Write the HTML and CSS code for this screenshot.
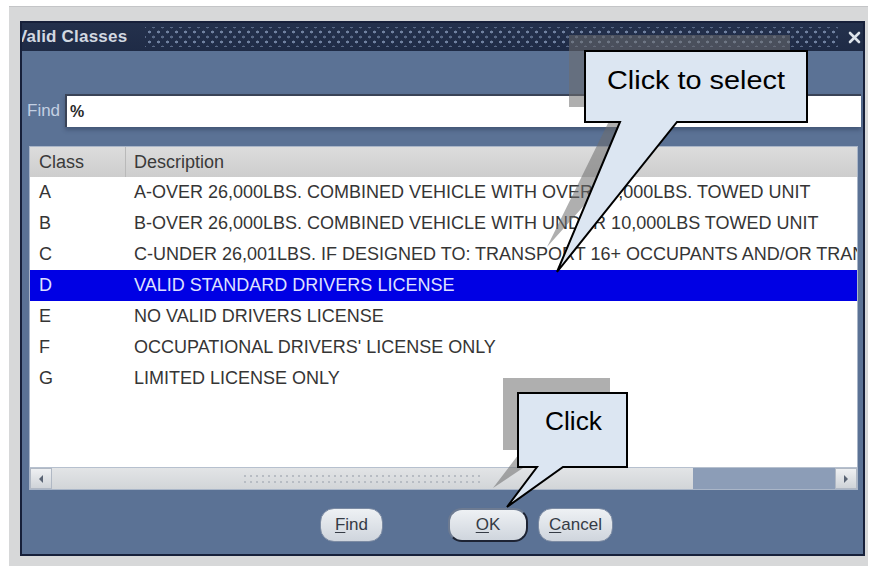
FILE: index.html
```html
<!DOCTYPE html>
<html lang="en">
<head>
<meta charset="utf-8">
<title>Valid Classes</title>
<link rel="stylesheet" href="styles.css">
</head>
<body>
<div class="frame">
  <div class="window">
    <div class="titlebar">
      <span class="title">Valid Classes</span>
      <span class="grip"></span>
      <svg class="close" width="13" height="13" viewBox="0 0 13 13"><path d="M2 2 L11 11 M11 2 L2 11" stroke="#dde3ea" stroke-width="2.6" stroke-linecap="round"/></svg>
    </div>

    <div class="find-row">
      <label class="find-label" for="find">Find</label>
      <div class="find-input" id="find">%</div>
    </div>

    <div class="list">
      <div class="list-head">
        <div class="cell col-class">Class</div>
        <div class="cell col-desc">Description</div>
      </div>
      <div class="list-body">
        <div class="row"><div class="cell col-class">A</div><div class="cell col-desc">A-OVER 26,000LBS. COMBINED VEHICLE WITH OVER 10,000LBS. TOWED UNIT</div></div>
        <div class="row"><div class="cell col-class">B</div><div class="cell col-desc">B-OVER 26,000LBS. COMBINED VEHICLE WITH UNDER 10,000LBS TOWED UNIT</div></div>
        <div class="row"><div class="cell col-class">C</div><div class="cell col-desc">C-UNDER 26,001LBS. IF DESIGNED TO: TRANSPORT 16+ OCCUPANTS AND/OR TRANSPORT HAZARDOUS MATERIALS</div></div>
        <div class="row selected"><div class="cell col-class">D</div><div class="cell col-desc">VALID STANDARD DRIVERS LICENSE</div></div>
        <div class="row"><div class="cell col-class">E</div><div class="cell col-desc">NO VALID DRIVERS LICENSE</div></div>
        <div class="row"><div class="cell col-class">F</div><div class="cell col-desc">OCCUPATIONAL DRIVERS' LICENSE ONLY</div></div>
        <div class="row"><div class="cell col-class">G</div><div class="cell col-desc">LIMITED LICENSE ONLY</div></div>
      </div>
      <div class="hscroll">
        <div class="sb-btn"><svg width="8" height="10" viewBox="0 0 8 10"><path d="M6 1 L2 5 L6 9 Z" fill="#5a6474"/></svg></div>
        <div class="sb-thumb"><span class="sb-dots"></span></div>
        <div class="sb-track"></div>
        <div class="sb-btn"><svg width="8" height="10" viewBox="0 0 8 10"><path d="M2 1 L6 5 L2 9 Z" fill="#5a6474"/></svg></div>
      </div>
    </div>

    <div class="buttons">
      <button class="btn btn-find"><u>F</u>ind</button>
      <button class="btn btn-ok"><u>O</u>K</button>
      <button class="btn btn-cancel"><u>C</u>ancel</button>
    </div>
  </div>
</div>

<svg class="callouts" width="872" height="569" viewBox="0 0 872 569">
  <!-- select callout -->
  <path class="co-shadow" d="M569 35 H790 V107 H672 L547 247 L616 107 H569 Z"/>
  <path class="co-box" d="M585 51 H807 V122 H677 L557 272 L620 122 H585 Z"/>
  <text class="co-text" x="607" y="89" textLength="178" lengthAdjust="spacingAndGlyphs">Click to select</text>
  <!-- OK callout -->
  <path class="co-shadow" d="M503 378 H610 V450 H550 L493 488 L522 450 H503 Z"/>
  <path class="co-box" d="M518 393 H627 V467 H563 L507 507 L537 467 H518 Z"/>
  <text class="co-text" x="545" y="430" textLength="57" lengthAdjust="spacingAndGlyphs">Click</text>
</svg>
</body>
</html>
```

FILE: styles.css
```css
html, body {
  margin: 0;
  padding: 0;
}

body {
  width: 872px;
  height: 569px;
  overflow: hidden;
  background: #ffffff;
  font-family: "Liberation Sans", Arial, sans-serif;
  position: relative;
}

/* light grey desktop frame around the form window */
.frame {
  margin: 6px 0 0 9px;
  width: 859px;
  padding: 14px 3px 10px 11px;
  box-sizing: border-box;
  background: #d7d8d9;
  border-top: 1px solid #c4c5c7;
}

.window {
  height: 535px;
  box-sizing: border-box;
  border: 2px solid #17203a;
  background: #5b7295;
  display: flex;
  flex-direction: column;
}

/* ---- title bar ---- */
.titlebar {
  height: 28px;
  flex: none;
  background: linear-gradient(#29375378, #1f2b46), #1f2b46;
  display: flex;
  align-items: center;
  overflow: hidden;
}

.title {
  margin-left: -6px;
  color: #d2d8e1;
  font-size: 17px;
  font-weight: bold;
  white-space: nowrap;
  letter-spacing: 0.2px;
}

.grip {
  flex: 1;
  height: 20px;
  margin: 0 10px 0 18px;
  background-image:
    radial-gradient(circle, #7081a0 1.2px, transparent 1.7px),
    radial-gradient(circle, #596987 1.2px, transparent 1.7px);
  background-size: 9px 10px, 9px 10px;
  background-position: 0 0, 4px 5px;
}

.close {
  flex: none;
  margin-right: 2px;
}

/* ---- find field ---- */
.find-row {
  margin-top: 43px;
  height: 33px;
  display: flex;
  align-items: stretch;
  padding-left: 5px;
  padding-right: 2px;
}

.find-label {
  width: 38px;
  display: flex;
  align-items: center;
  color: #c3cfe2;
  font-size: 17px;
}

.find-input {
  flex: 1;
  background: #ffffff;
  border-top: 2px solid #3a4357;
  border-left: 2px solid #3a4357;
  box-sizing: border-box;
  display: flex;
  align-items: center;
  padding-left: 3px;
  color: #2a2a2a;
  font-size: 16px;
  font-weight: bold;
  box-shadow: 0 3px 4px rgba(40, 55, 85, 0.45);
}

/* ---- result list ---- */
.list {
  margin: 19px 5px 0 7px;
  display: flex;
  flex-direction: column;
  background: #ffffff;
  border: 1px solid #aab6c8;
}

.list-head {
  height: 30px;
  display: flex;
  background: linear-gradient(#dcdcdc, #cdcdcd);
  color: #3a3a3a;
}

.list-head .col-class {
  border-right: 1px solid #b9b9b9;
}

.list-body {
  height: 290px;
}

.row {
  height: 31px;
  display: flex;
  color: #353535;
}

.row.selected {
  background: #0000e4;
  color: #dfe1ff;
}

.cell {
  font-size: 18px;
  display: flex;
  align-items: center;
  white-space: nowrap;
  overflow: hidden;
}

.col-class {
  width: 96px;
  flex: none;
  padding-left: 9px;
  box-sizing: border-box;
}

.col-desc {
  flex: 1;
  padding-left: 8px;
}

/* ---- horizontal scrollbar ---- */
.hscroll {
  height: 21px;
  display: flex;
  border-top: 1px solid #b6c0ce;
  background: #d9dcdf;
}

.sb-btn {
  width: 22px;
  flex: none;
  display: flex;
  align-items: center;
  justify-content: center;
  background: linear-gradient(#eef0f2, #cfd3d8);
  border: 1px solid #b0b8c4;
  box-sizing: border-box;
}

.sb-thumb {
  width: 641px;
  flex: none;
  display: flex;
  align-items: center;
  padding-left: 190px;
  box-sizing: border-box;
  background: linear-gradient(#e2e4e6, #d2d5d8);
}

.sb-dots {
  width: 240px;
  height: 12px;
  background-image: radial-gradient(circle, #b7bcc3 1px, transparent 1.5px);
  background-size: 6px 6px;
}

.sb-track {
  flex: 1;
  background: #8c9db7;
}

/* ---- button bar ---- */
.buttons {
  margin-top: 18px;
  display: flex;
  padding-left: 298px;
}

.btn {
  height: 34px;
  box-sizing: border-box;
  border: 1px solid #7c8ba3;
  border-radius: 14px;
  background: linear-gradient(#eef1f4, #cfd5dd);
  color: #353b45;
  font-family: "Liberation Sans", Arial, sans-serif;
  font-size: 17px;
  padding: 0;
}

.btn u {
  text-decoration-thickness: 1px;
  text-underline-offset: 2px;
}

.btn-find {
  width: 63px;
  margin-right: 65px;
}

.btn-ok {
  width: 80px;
  margin-right: 10px;
  border: 2px solid #1d2333;
  border-top-color: #6d7b92;
  border-left-color: #6d7b92;
}

.btn-cancel {
  width: 75px;
}

/* ---- annotation callouts drawn over the dialog ---- */
.callouts {
  position: absolute;
  left: 0;
  top: 0;
  pointer-events: none;
}

.co-shadow {
  fill: rgba(110, 110, 110, 0.55);
}

.co-box {
  fill: #dce6f2;
  stroke: #000000;
  stroke-width: 2;
  stroke-linejoin: miter;
}

.co-text {
  font-family: "Liberation Sans", Arial, sans-serif;
  font-size: 26px;
  fill: #000000;
}
```
